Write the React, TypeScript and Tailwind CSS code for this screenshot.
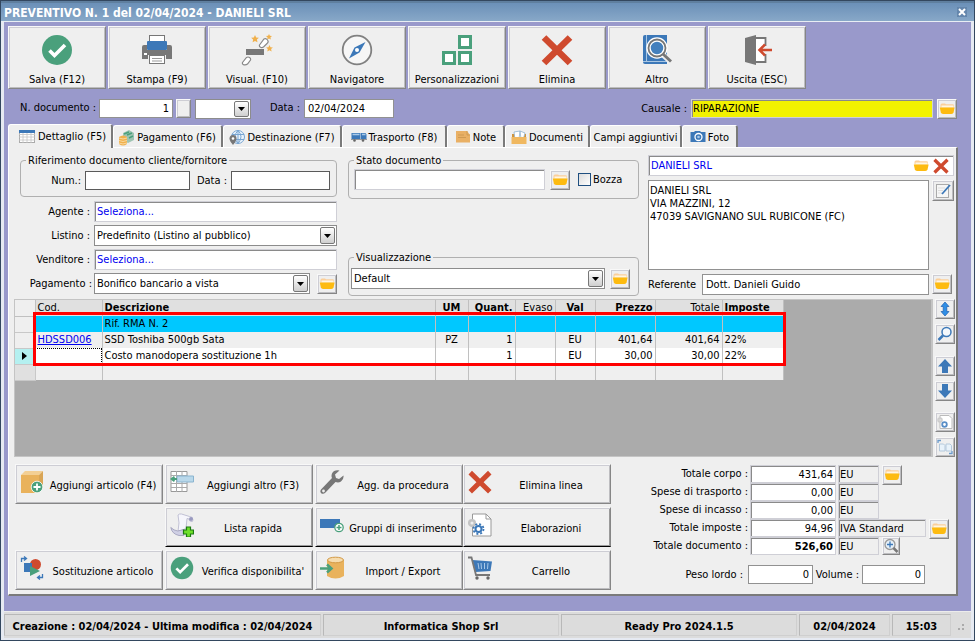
import React from "react";

const raised =
  "bg-[#efefef] border border-t-[#f8f8f8] border-l-[#f8f8f8] border-r-[#868686] border-b-[#868686] shadow-[inset_1px_1px_0_#cdcdd4,inset_-1px_-1px_0_#bdbdc0]";
const raisedDark =
  "bg-[#efefef] border border-t-[#f8f8f8] border-l-[#f8f8f8] border-r-[#868686] border-b-black shadow-[inset_1px_1px_0_#cdcdd4,inset_-1px_-1px_0_#9a9a9a]";
const sunkenEdge = "border border-[#cfcfd6] shadow-[inset_1px_1px_0_#8a8a8a]";
const sunken = "bg-white px-[2px] outline-none min-w-0 " + sunkenEdge;
const flat = "bg-white border border-[#919191] px-[3px] outline-none min-w-0";
const groupBox = "min-w-0 rounded-[4px] border border-[#b0b0b0]";

function Check() {
  return (
    <svg viewBox="0 0 32 32" className="size-full">
      <circle cx="16" cy="16" r="15" fill="#4aa07c" />
      <path d="M8.5 16.5l5 5L24 11" fill="none" stroke="#fff" strokeWidth="3.6" />
    </svg>
  );
}

function RedCross() {
  return (
    <svg viewBox="0 0 32 32" className="size-full">
      <path d="M3 3.500L29 29M29 3.500L3 29" stroke="#cf4a2e" strokeWidth="6.600" />
    </svg>
  );
}

function Printer() {
  return (
    <svg viewBox="0 0 32 32" className="size-full">
      <rect x="8.500" y="1.500" width="15" height="8" fill="#fff" stroke="#777" />
      <path d="M1 13q0-2 2-2h3v5h20v-5h3q2 0 2 2v12h-6v-4H7v4H1z" fill="#777" />
      <rect x="6" y="7" width="20" height="9" rx="1" fill="#3c78b8" />
      <rect x="8.500" y="21.500" width="15" height="8" fill="#fff" stroke="#777" />
      <path d="M11 24.500h10M11 27h10" stroke="#999" />
      <rect x="3" y="19" width="3" height="2" fill="#fff" />
    </svg>
  );
}

function Wand() {
  return (
    <svg viewBox="0 0 32 32" className="size-full">
      <path d="M14 1l1.200 2.400 2.700.3-2 1.900.6 2.700-2.500-1.400-2.400 1.400.5-2.700-2-1.900 2.700-.3zM28 0l.9 1.800 2.100.2-1.600 1.400.5 2-1.900-1-1.900 1 .5-2L25 2l2.100-.2zM28.500 11l1 2.200 2.400.3-1.800 1.600.5 2.400-2.100-1.200-2.200 1.200.5-2.400-1.700-1.600 2.300-.3z" fill="#f0b04c" />
      <rect x="5" y="15" width="18" height="6" fill="#777" />
      <path d="M18.500 11l4.500-6q2-1 3.500 1t-.5 3.500L22.500 13q-1.500 1-3 .3t-1-2.300zM1.500 28.500l4-5q1.500-1 3 0t1 2.500L6.500 30q-1.500 1.200-3.500.8t-1.500-2.300z" fill="#fff" stroke="#888" strokeWidth="1.200" />
    </svg>
  );
}

function Compass() {
  return (
    <svg viewBox="0 0 32 32" className="size-full">
      <circle cx="16" cy="16" r="14.300" fill="#f6f6f6" stroke="#808080" strokeWidth="1.800" />
      <path d="M24.500 8L18.500 18.500 8 24.500 13.500 13.500z" fill="#3c78b8" />
      <circle cx="16" cy="16" r="2" fill="#fff" />
    </svg>
  );
}

function Blocks() {
  return (
    <svg viewBox="0 0 32 32" className="size-full" fill="#fff" stroke="#4aa07c" strokeWidth="3">
      <rect x="18.500" y="2.500" width="11" height="11" />
      <rect x="2.500" y="18.500" width="11" height="11" />
      <rect x="18.500" y="18.500" width="11" height="11" />
    </svg>
  );
}

function BookSearch() {
  return (
    <svg viewBox="0 0 32 32" className="size-full">
      <path d="M2 3q0-2 2-2h22v29H4q-2 0-2-2z" fill="#3c78b8" />
      <path d="M5.500 1v26M2 27.500h24" stroke="#a9c6e2" />
      <path d="M21 20l9 8" stroke="#efefef" strokeWidth="5.500" />
      <circle cx="16" cy="14" r="8.500" fill="#4480bd" stroke="#fff" strokeWidth="4.500" />
      <circle cx="16" cy="14" r="8.500" fill="none" stroke="#777" strokeWidth="1.800" />
      <path d="M22 20l8 7.500" stroke="#777" strokeWidth="3" />
    </svg>
  );
}

function Door() {
  return (
    <svg viewBox="0 0 32 32" className="size-full">
      <path d="M13 4h11.500v24H13" fill="#fff" stroke="#777" strokeWidth="1.800" />
      <path d="M4 4l11-3v30L4 28z" fill="#777" />
      <path d="M31 16H20" stroke="#efefef" strokeWidth="8" />
      <path d="M31 16H19M24 10.500L18.500 16l5.500 5.500" fill="none" stroke="#cf4a2e" strokeWidth="2.600" />
    </svg>
  );
}

function Folder() {
  return (
    <svg viewBox="0 0 16 16" className="size-4 shrink-0">
      <path d="M1.500 4q0-1.500 1.500-1.500h3l1 .8h6.500q1.500 0 1.500 1.200v2h-13.500z" fill="#fbcf9a" />
      <path d="M2.500 4.500h12v2h-12z" fill="#fff6e2" />
      <path d="M.8 6.500h14.800l-1 4.700q-.4 1.800-2.200 1.800H4q-1.800 0-2.200-1.800z" fill="#fdbb10" />
    </svg>
  );
}

function FolderButton({ label }: { label: string }) {
  return (
    <button aria-label={label} className={"flex h-[20px] w-[20px] shrink-0 items-center justify-center " + raised}>
      <Folder />
    </button>
  );
}

function Drop({ id, label, value, className }: { id: string; label?: string; value: string; className: string }) {
  return (
    <div className={"relative " + className}>
      <select id={id} aria-label={label} className="size-full appearance-none border border-[#8c8c8c] bg-white px-[2px] outline-none">
        <option>{value}</option>
      </select>
      <span className="pointer-events-none absolute inset-y-[2px] right-[2px] flex w-[15px] items-center justify-center rounded-[2px] border border-[#777] bg-linear-to-b from-white to-[#cfcfcf]">
        <svg viewBox="0 0 7 4" className="h-[4px] w-[7px]">
          <path d="M0 0h7L3.500 4z" />
        </svg>
      </span>
    </div>
  );
}

const tools = [
  { label: "Salva (F12)", icon: <Check /> },
  { label: "Stampa (F9)", icon: <Printer /> },
  { label: "Visual. (F10)", icon: <Wand /> },
  { label: "Navigatore", icon: <Compass /> },
  { label: "Personalizzazioni", icon: <Blocks /> },
  { label: "Elimina", icon: <RedCross /> },
  { label: "Altro", icon: <BookSearch /> },
  { label: "Uscita (ESC)", icon: <Door /> },
];

const tabIcons = {
  table: (
    <svg viewBox="0 0 16 16" className="size-4">
      <rect x=".5" y="1.500" width="15" height="12" fill="#fff" stroke="#aaa" />
      <path d="M0 5.500h16M0 8h16M0 11h16M4 4v10M8 4v10M12 4v10" stroke="#c4c4c4" strokeWidth=".8" />
      <rect y="1" width="16" height="3" fill="#3c78b8" />
    </svg>
  ),
  money: (
    <svg viewBox="0 0 16 16" className="size-4">
      <path d="M4 3l6-3 5 3v7l-6 3-5-3z" fill="#9fc4b2" />
      <path d="M5 4l5-2M8 5l5-2M10 8l4-2" stroke="#4aa07c" strokeWidth="1.500" />
      <path d="M0 7q4-3 8 0v7q-4 3-8 0z" fill="#f0b04c" />
      <path d="M0 8q4 2 8 0M0 10.500q4 2 8 0M0 13q4 2 8 0" fill="none" stroke="#fbe2b4" strokeWidth=".8" />
    </svg>
  ),
  globe: (
    <svg viewBox="0 0 16 16" className="size-4">
      <circle cx="9" cy="7" r="6.500" fill="#eaf3fb" stroke="#78a5d2" />
      <path d="M9 .5v13M3 4.500h12M3 9.500h12M9 .5q-6 6 0 13M9 .5q6 6 0 13" fill="none" stroke="#78a5d2" />
      <path d="M4 5q3.500 0 3.500 3.500Q7.500 11 4 15 .5 11 .5 8.500.5 5 4 5z" fill="#777" />
      <circle cx="4" cy="8.500" r="1.300" fill="#fff" />
    </svg>
  ),
  truck: (
    <svg viewBox="0 0 16 16" className="size-4">
      <path d="M.5 3h9v6h-9zM10 3h4.500l1 1.500V9H10z" fill="#3c78b8" />
      <path d="M1.500 4.500h7M11 4.500h3.500" stroke="#a9c9e8" strokeWidth="1.500" />
      <path d="M0 9h16v1H0z" fill="#9a9a9a" />
      <circle cx="3.500" cy="10.500" r="1.300" fill="#666" />
      <circle cx="12" cy="10.500" r="1.300" fill="#666" />
    </svg>
  ),
  note: (
    <svg viewBox="0 0 16 16" className="size-4">
      <path d="M1 1h11l3 4v7.500H1z" fill="#e9b065" />
      <path d="M12 1v4h3M3 5h6M3 7.500h8" fill="none" stroke="#cf9a52" />
    </svg>
  ),
  docs: (
    <svg viewBox="0 0 16 16" className="size-4">
      <path d="M1 4h14v9H1z" fill="#cf943d" />
      <path d="M3 2l6-1 1 8-6 1zM9 1l5 2-2 7-4-1z" fill="#fff" stroke="#8fb2cf" strokeWidth=".8" />
      <path d="M.5 7h15v7H.5z" fill="#f0b860" />
    </svg>
  ),
  camera: (
    <svg viewBox="0 0 16 16" className="size-4">
      <path d="M.5 2H4l1-1h5l1 1h4.500v10H.5z" fill="#3c78b8" />
      <circle cx="8.500" cy="7" r="3.500" fill="#3c78b8" stroke="#fff" strokeWidth="1.300" />
      <circle cx="8.500" cy="7" r="1.300" fill="#a9c9e8" />
    </svg>
  ),
};

const tabs = [
  { label: "Pagamento (F6)", icon: tabIcons.money, w: "w-[110px]" },
  { label: "Destinazione (F7)", icon: tabIcons.globe, w: "w-[119px]" },
  { label: "Trasporto (F8)", icon: tabIcons.truck, w: "w-[105px]" },
  { label: "Note", icon: tabIcons.note, w: "w-[58px]" },
  { label: "Documenti", icon: tabIcons.docs, w: "w-[85px]" },
  { label: "Campi aggiuntivi", icon: null, w: "w-[92px]" },
  { label: "Foto", icon: tabIcons.camera, w: "w-[56px]" },
];

const sideIcons = [
  [
    {
      label: "Altezza righe",
      icon: (
        <svg viewBox="0 0 16 16" className="size-4">
          <path d="M8 1l4 4.500H9.800v5H12L8 15l-4-4.500h2.200v-5H4z" fill="#2f8ee6" stroke="#1f5fae" strokeWidth=".7" />
        </svg>
      ),
    },
    {
      label: "Cerca",
      icon: (
        <svg viewBox="0 0 16 16" className="size-4">
          <circle cx="9.500" cy="6" r="4.500" fill="#f4f8fc" stroke="#3c78b8" strokeWidth="1.500" />
          <path d="M6 9.500L1.500 14" stroke="#3c78b8" strokeWidth="2.500" />
        </svg>
      ),
    },
  ],
  [
    {
      label: "Sposta su",
      icon: (
        <svg viewBox="0 0 16 16" className="size-4">
          <path d="M8 1l7 7.500h-4V15H5V8.500H1z" fill="#3c78b8" />
        </svg>
      ),
    },
    {
      label: "Sposta giù",
      icon: (
        <svg viewBox="0 0 16 16" className="size-4">
          <path d="M8 15l7-7.500h-4V1H5v6.500H1z" fill="#3c78b8" />
        </svg>
      ),
    },
  ],
  [
    {
      label: "Elabora",
      icon: (
        <svg viewBox="0 0 16 16" className="size-4">
          <path d="M3 1.500h9l3 3v10H3z" fill="#fff" stroke="#bbb" />
          <circle cx="3" cy="6" r="2" fill="none" stroke="#ccc" strokeWidth="1.500" />
          <circle cx="7.500" cy="10.500" r="2.300" fill="#fff" stroke="#5a8ec6" strokeWidth="1.800" />
        </svg>
      ),
    },
    {
      label: "Sostituisci",
      icon: (
        <svg viewBox="0 0 16 16" className="size-4">
          <path d="M2.500 5h4l1.500 1.500V12H2.500zM9 5h4l1.500 1.500V12H9z" fill="#e8f2fa" stroke="#b4c9dc" />
          <path d="M1 4V1.500h3M15 12v2.500h-3" fill="none" stroke="#6a9acb" strokeWidth="1.300" />
        </svg>
      ),
    },
  ],
];

const actions = [
  {
    label: "Aggiungi articolo (F4)",
    icon: (
      <svg viewBox="0 0 24 24" className="size-6">
        <path d="M1 5l4-4h18l-4 4z" fill="#f3cf94" />
        <path d="M19 5l4-4v17l-4 4z" fill="#d9a555" />
        <path d="M1 5h18v18H1z" fill="#e9b25c" />
        <circle cx="17" cy="17" r="5.800" fill="#4aa07c" stroke="#fff" strokeWidth=".8" />
        <path d="M17 13.500v7M13.500 17h7" stroke="#fff" strokeWidth="1.800" />
      </svg>
    ),
  },
  {
    label: "Aggiungi altro (F3)",
    icon: (
      <svg viewBox="0 0 24 24" className="size-6">
        <path d="M1 1.500h16v20H1z" fill="#fff" stroke="#999" />
        <path d="M1 5.500h16M1 13.500h16M1 17.500h16M6.500 1v21M12 1v21" stroke="#aaa" />
        <path d="M7 6h16.500v6H7z" fill="#b9d8ea" stroke="#8ab4cf" />
        <path d="M7 9H2M4.500 6.800L1.500 9l3 2.200" fill="none" stroke="#4aa07c" strokeWidth="1.800" />
      </svg>
    ),
  },
  {
    label: "Agg. da procedura",
    icon: (
      <svg viewBox="0 0 24 24" className="size-6">
        <path d="M23.500 5.500L19 9l-3-1-1-3.500L19.500.5Q14-.5 12 3.500q-1 2.500 0 4.500L1 19.500q-1.500 2.500.5 4 2 1 4-1L15.500 12q3 1 5.500-.500 3-2 2.500-6z" fill="#777" />
        <circle cx="3.500" cy="21" r="1.400" fill="#efefef" />
      </svg>
    ),
  },
  {
    label: "Elimina linea",
    icon: <RedCross />,
  },
  null,
  {
    label: "Lista rapida",
    icon: (
      <svg viewBox="0 0 24 24" className="size-6">
        <path d="M8 2q1.500-1.500 3.500-1l8 2.500q3.500 0 3.500 3.500 0 2-2 1.500T19 6l-2-.5-1 10-8 3q2-9 0-16.500z" fill="#f6f6fc" stroke="#b4b4cc" strokeWidth=".8" />
        <circle cx="21" cy="6" r="2" fill="#9a9ac0" />
        <path d="M.8 14.500q3 3 7 3.500l6-1.500v6H9Q2 21 .8 14.500z" fill="#cfcfe4" stroke="#9a9ab8" strokeWidth=".8" />
        <path d="M16.500 14h4v3h3v4h-3v3h-4v-3h-3v-4h3z" fill="#6fe02a" stroke="#1c7a12" strokeWidth="1.200" />
      </svg>
    ),
  },
  {
    label: "Gruppi di inserimento",
    icon: (
      <svg viewBox="0 0 24 24" className="size-6">
        <path d="M0 6h20v9H0z" fill="#3c78b8" />
        <circle cx="19" cy="14.500" r="4.200" fill="#fff" stroke="#4aa07c" strokeWidth="1.300" />
        <path d="M19 12v5M16.500 14.500h5" stroke="#4aa07c" strokeWidth="1.500" />
      </svg>
    ),
  },
  {
    label: "Elaborazioni",
    icon: (
      <svg viewBox="0 0 24 24" className="size-6">
        <path d="M4.500 1H18l5 5v17H4.500z" fill="#fff" stroke="#999" />
        <path d="M18 1v5h5" fill="none" stroke="#999" />
        <circle cx="4" cy="10" r="2.800" fill="#efefef" stroke="#c4c4c4" strokeWidth="2.500" />
        <circle cx="10.500" cy="16" r="5" fill="none" stroke="#3c78b8" strokeWidth="1.800" strokeDasharray="2 1.930" />
        <circle cx="10.500" cy="16" r="3" fill="#fff" stroke="#3c78b8" strokeWidth="2" />
      </svg>
    ),
  },
  {
    label: "Sostituzione articolo",
    icon: (
      <svg viewBox="0 0 24 24" className="size-6">
        <circle cx="15.500" cy="8.500" r="5.500" fill="#cf4a2e" />
        <path d="M4 7h8v9H4z" fill="#3c78b8" />
        <path d="M10 10l10 5-10 5z" fill="#4aa07c" />
        <path d="M1.500 6V2.500h4M4 .5l2.500 2L4 4.500M22.500 18v3.500h-4M20 19.500l-2.500 2 2.500 2" fill="none" stroke="#3c78b8" strokeWidth="1.300" />
      </svg>
    ),
  },
  { label: "Verifica disponibilita'", icon: <Check /> },
  {
    label: "Import / Export",
    icon: (
      <svg viewBox="0 0 24 24" className="size-6">
        <path d="M7 4v16q8.500 5 17 0V4z" fill="#e9b25c" />
        <ellipse cx="15.500" cy="4" rx="8" ry="2.800" fill="#f6dcae" stroke="#d39a45" />
        <path d="M0 12.500h10M7 8.500l4.500 4L7 16.500" fill="none" stroke="#4aa07c" strokeWidth="2.500" />
      </svg>
    ),
  },
  {
    label: "Carrello",
    icon: (
      <svg viewBox="0 0 24 24" className="size-6">
        <path d="M4.500 4L24 5.500 22.500 15 7.500 16z" fill="#3c78b8" />
        <path d="M10 7l1 6M13 7l.5 6M16.500 7v6M20 7l-.5 6" stroke="#a9c9e8" />
        <path d="M0 1.500h3.500L8 19h14" fill="none" stroke="#777" strokeWidth="1.800" />
        <circle cx="9" cy="22" r="1.700" fill="#666" />
        <circle cx="20" cy="22" r="1.700" fill="#666" />
      </svg>
    ),
  },
];

const columns = [
  { label: "Cod.", cls: "text-left font-normal" },
  { label: "Descrizione", cls: "text-left font-bold" },
  { label: "UM", cls: "text-center font-bold" },
  { label: "Quant.", cls: "text-right font-bold" },
  { label: "Evaso", cls: "text-right font-normal" },
  { label: "Val", cls: "text-center font-bold" },
  { label: "Prezzo", cls: "text-right font-bold" },
  { label: "Totale", cls: "text-right font-normal" },
  { label: "Imposte", cls: "text-left font-bold" },
];
const cellAlign = ["text-left", "text-left", "text-center", "text-right", "text-right", "text-center", "text-right", "text-right", "text-left"];
const rows = [
  { bg: "bg-[#00c8ff]", cells: ["", "Rif. RMA N. 2", "", "", "", "", "", "", ""] },
  { bg: "bg-[#efefef]", cells: ["HDSSD006", "SSD Toshiba 500gb Sata", "PZ", "1", "", "EU", "401,64", "401,64", "22%"] },
  { bg: "bg-white", cells: ["", "Costo manodopera sostituzione 1h", "", "1", "", "EU", "30,00", "30,00", "22%"] },
  { bg: "bg-[#efefef]", cells: ["", "", "", "", "", "", "", "", ""] },
];

function Grid() {
  return (
    <div className="relative min-h-[158px] flex-1 border border-r-2 border-[#c4c4c4] bg-[#ababab]">
      <table className="w-[768px] table-fixed border-collapse leading-[14px]">
        <colgroup>
          <col className="w-[20px]" />
          <col className="w-[67px]" />
          <col className="w-[333px]" />
          <col className="w-[33px]" />
          <col className="w-[47px]" />
          <col className="w-[40px]" />
          <col className="w-[40px]" />
          <col className="w-[60px]" />
          <col className="w-[67px]" />
          <col className="w-[61px]" />
        </colgroup>
        <thead>
          <tr className="h-4 bg-[#e0e0e0]">
            <th className="border border-t-0 border-l-0 border-[#c0c0c0] bg-[#efefef] p-0" />
            {columns.map((c) => (
              <th key={c.label} className={"border-r border-[#c0c0c0] px-[2px] py-0 " + c.cls}>
                {c.label}
              </th>
            ))}
          </tr>
        </thead>
        <tbody>
          {rows.map((r, i) => (
            <tr key={i} className={"h-4 " + r.bg}>
              <td className={"border border-l-0 border-[#c8c8c8] p-0 " + (i === 2 ? "bg-[#b4f0f0]" : i === 3 ? "bg-[#e0e0e0]" : "bg-[#efefef]")}>
                {i === 2 && (
                  <svg viewBox="0 0 5 8" className="mx-auto h-2 w-[5px]">
                    <path d="M0 0l5 4-5 4z" />
                  </svg>
                )}
              </td>
              {r.cells.map((c, j) => (
                <td
                  key={j}
                  className={
                    "border-r border-[#c0c0c0] px-[2px] py-0 whitespace-nowrap " +
                    (i === 2 && j === 0 ? "outline-1 -outline-offset-1 outline-black outline-dotted " : "") +
                    cellAlign[j]
                  }
                >
                  {j === 0 && c ? (
                    <a href="#" className="text-[#0000f0] underline">
                      {c}
                    </a>
                  ) : (
                    c
                  )}
                </td>
              ))}
            </tr>
          ))}
        </tbody>
      </table>
      <div className="pointer-events-none absolute top-[12px] left-[18px] h-[54px] w-[753px] border-3 border-[#ff0000]" />
    </div>
  );
}

const totals = [
  { id: "corpo", label: "Totale corpo :", value: "431,64", unit: "EU", bold: false },
  { id: "trasporto", label: "Spese di trasporto :", value: "0,00", unit: "EU", bold: false },
  { id: "incasso", label: "Spese di incasso :", value: "0,00", unit: "EU", bold: false },
  { id: "imposte", label: "Totale imposte :", value: "94,96", unit: "IVA Standard", bold: false },
  { id: "documento", label: "Totale documento :", value: "526,60", unit: "EU", bold: true },
];

function Totals() {
  return (
    <div className="mr-[4px] ml-auto flex w-[322px] flex-col pt-[1px]">
      {totals.map((t) => (
        <div key={t.id} className="flex h-[18px] gap-[2px]">
          <label htmlFor={t.id} className="w-[118px] shrink-0 text-right leading-[18px] whitespace-nowrap">
            {t.label}
          </label>
          <input id={t.id} defaultValue={t.value} className={"h-[18px] w-[86px] shrink-0 text-right " + sunken + (t.bold ? " font-bold" : "")} />
          <output className={"mr-[1px] h-[18px] shrink-0 pl-[1px] leading-[17px] " + sunkenEdge + (t.id === "imposte" ? " w-[88px]" : " w-[41px]")}>
            {t.unit}
          </output>
          {(t.id === "corpo" || t.id === "imposte") && <FolderButton label={"Apri " + t.label} />}
          {t.id === "documento" && (
            <button aria-label="Dettaglio totale" className={"flex h-[18px] w-[18px] items-center justify-center " + raised}>
              <svg viewBox="0 0 16 16" className="size-4 shrink-0">
                <circle cx="7" cy="6.500" r="5" fill="#e6f0f8" stroke="#999" strokeWidth="1.300" />
                <path d="M7 3.500v6M4 6.500h6" stroke="#3c78b8" strokeWidth="1.300" />
                <path d="M10.500 10l4 4" stroke="#777" strokeWidth="2.500" />
              </svg>
            </button>
          )}
        </div>
      ))}
      <div className="mt-[10px] flex h-[19px] items-center">
        <label htmlFor="peso" className="mr-[5px] w-[113px] text-right">
          Peso lordo :
        </label>
        <input id="peso" defaultValue="0" className={"h-[19px] w-[65px] text-right " + flat} />
        <label htmlFor="volume" className="w-[49px] pr-[3px] text-right whitespace-nowrap">
          Volume :
        </label>
        <input id="volume" defaultValue="0" className={"h-[19px] w-[63px] text-right " + flat} />
      </div>
    </div>
  );
}

function Header() {
  return (
    <>
      <div className="flex gap-[2px] px-[4px] pt-[4px]">
        {tools.map((t) => (
          <button key={t.label} className={"flex h-[63px] w-[98px] flex-col items-center justify-between pt-[7px] pb-[1px] " + raised}>
            <span className="size-[32px]">{t.icon}</span>
            <span className="whitespace-nowrap">{t.label}</span>
          </button>
        ))}
      </div>
      <div className="mt-[10px] flex h-5 pr-[14px] pl-4">
        <label htmlFor="ndoc" className="w-[79px] leading-[18px] whitespace-nowrap">
          N. documento :
        </label>
        <input id="ndoc" defaultValue="1" className={"h-[19px] w-[74px] text-right " + flat} />
        <button aria-label="Numerazione" className={"mx-[3px] h-[19px] w-[15px] " + raised} />
        <Drop id="serie" label="Serie" value="" className="ml-[1px] h-5 w-[56px]" />
        <label htmlFor="data" className="w-[53px] pr-[4px] text-right leading-[18px]">
          Data :
        </label>
        <input id="data" defaultValue="02/04/2024" className={"h-[19px] w-[90px] " + flat} />
        <label htmlFor="causale" className="ml-auto pr-[4px] leading-[20px]">
          Causale :
        </label>
        <input
          id="causale"
          defaultValue="RIPARAZIONE"
          className={"mr-[4px] h-[19px] w-[242px] bg-[#f2f200] px-[1px] outline-none " + sunkenEdge}
        />
        <FolderButton label="Apri causale" />
      </div>
    </>
  );
}

function Customer() {
  return (
    <div className="flex flex-1 flex-col gap-[4px] pt-[1px]">
      <div className={"flex h-[21px] items-center bg-white " + sunkenEdge}>
        <input aria-label="Cliente" defaultValue="DANIELI SRL" className="min-w-0 flex-1 px-[2px] text-[#0000f0] outline-none" />
        <button aria-label="Apri cliente" className="mr-[4px]">
          <Folder />
        </button>
        <button aria-label="Rimuovi cliente" className="mr-[4px] size-4">
          <RedCross />
        </button>
      </div>
      <div className="flex gap-[3px]">
        <textarea
          aria-label="Indirizzo"
          defaultValue={"DANIELI SRL\nVIA MAZZINI, 12\n47039 SAVIGNANO SUL RUBICONE (FC)"}
          className="h-[90px] min-w-0 flex-1 resize-none border border-[#919191] bg-white px-[1px] py-[3px] leading-[13px] outline-none"
        />
        <button aria-label="Modifica indirizzo" className={"flex h-[21px] w-[22px] items-center justify-center " + raised}>
          <svg viewBox="0 0 16 16" className="size-4">
            <rect x="1.500" y="1.500" width="12" height="13" fill="#f6f6f6" stroke="#aaa" />
            <path d="M3 5h7M3 7.500h5M3 10h4" stroke="#ddd" />
            <path d="M15 2L7 11" stroke="#3c78b8" strokeWidth="1.800" />
          </svg>
        </button>
      </div>
      <div className="flex items-start gap-[3px]">
        <label htmlFor="referente" className="w-[51px] leading-[22px]">
          Referente
        </label>
        <input id="referente" defaultValue="Dott. Danieli Guido" className={"h-[21px] flex-1 " + flat} />
        <div className="w-[22px]">
          <FolderButton label="Apri referente" />
        </div>
      </div>
    </div>
  );
}

function TopForm() {
  return (
    <div className="flex pt-[6px] pr-[2px] pl-[11px]">
      <div className="flex w-[317px] flex-col gap-[3px]">
        <fieldset className={"mb-[1px] " + groupBox}>
          <legend className="ml-[5px] h-[13px] px-[2px] leading-[13px]">Riferimento documento cliente/fornitore</legend>
          <div className="flex items-center pt-[4px] pr-[6px] pb-[6px]">
            <label htmlFor="rifnum" className="w-[64px] pr-[4px] text-right">
              Num.:
            </label>
            <input id="rifnum" className="h-[19px] w-[105px] border border-[#5a5a5a] bg-white" />
            <label htmlFor="rifdata" className="w-[41px] pr-[4px] text-right whitespace-nowrap">
              Data :
            </label>
            <input id="rifdata" className="h-[19px] min-w-0 flex-1 border border-[#5a5a5a] bg-white" />
          </div>
        </fieldset>
        <div className="flex items-center">
          <label htmlFor="agente" className="w-[74px] pr-[4px] text-right">Agente :</label>
          <input id="agente" defaultValue="Seleziona..." className={"h-[21px] flex-1 text-[#0000f0] " + sunken} />
        </div>
        <div className="flex items-center">
          <label htmlFor="listino" className="w-[74px] pr-[4px] text-right">Listino :</label>
          <Drop id="listino" value="Predefinito (Listino al pubblico)" className="h-[21px] flex-1" />
        </div>
        <div className="flex items-center">
          <label htmlFor="venditore" className="w-[74px] pr-[4px] text-right">Venditore :</label>
          <input id="venditore" defaultValue="Seleziona..." className={"h-[21px] flex-1 text-[#0000f0] " + sunken} />
        </div>
        <div className="flex items-center">
          <label htmlFor="pagamento" className="w-[74px] pr-[2px] text-right whitespace-nowrap">Pagamento :</label>
          <Drop id="pagamento" value="Bonifico bancario a vista" className="mr-[7px] h-[21px] flex-1" />
          <FolderButton label="Apri pagamento" />
        </div>
      </div>
      <div className="mr-[9px] ml-[11px] flex w-[291px] flex-col justify-between">
        <fieldset className={groupBox}>
          <legend className="ml-[5px] h-[13px] px-[2px] leading-[13px]">Stato documento</legend>
          <div className="flex items-center pt-[2px] pb-[8px] pl-[5px]">
            <input aria-label="Stato documento" className={"mr-[5px] h-[21px] w-[191px] " + sunken} />
            <FolderButton label="Apri stato documento" />
            <input id="bozza" type="checkbox" className="mr-[2px] ml-[8px] size-[13px] appearance-none border border-[#1f4f80] bg-linear-to-br from-[#dcdcdc] to-white" />
            <label htmlFor="bozza">Bozza</label>
          </div>
        </fieldset>
        <fieldset className={groupBox}>
          <legend className="ml-[5px] h-[13px] px-[2px] leading-[13px]">
            <label htmlFor="vista">Visualizzazione</label>
          </legend>
          <div className="flex items-center gap-[5px] pt-[4px] pb-[6px] pl-[2px]">
            <Drop id="vista" value="Default" className="h-[21px] w-[254px]" />
            <FolderButton label="Apri visualizzazione" />
          </div>
        </fieldset>
      </div>
      <Customer />
    </div>
  );
}

const statusCell =
  "flex items-center justify-center overflow-hidden border border-t-[#b8b8b8] border-l-[#b8b8b8] border-r-[#cfcfcf] border-b-[#cfcfcf] pt-[3px] whitespace-nowrap";

export default function App() {
  return (
    <div className="flex min-h-screen flex-col border border-[#33475f] bg-[#e6eaf2] px-[3px] pb-[2px] text-[11px] leading-[14px] text-black [font-family:'DejaVu_Sans_Condensed','DejaVu_Sans',sans-serif] [font-stretch:condensed]">
      <header className="-mx-[3px] flex h-[21px] items-center border-t-2 border-b border-t-[#5f7f9f] border-b-[#e8eef4] bg-linear-to-b from-[#6b90b8] to-[#88a8c8] pt-[2px] pr-[7px] pl-[3px]">
        <h1 className="text-[12px] font-bold text-white">PREVENTIVO N. 1 del 02/04/2024 - DANIELI SRL</h1>
        <button aria-label="Chiudi" className="mb-[2px] ml-auto flex size-[10px] items-center justify-center bg-[#6486ac]">
          <svg viewBox="0 0 8 8" className="size-2">
            <path d="M1 1l6 6M7 1L1 7" stroke="#fff" strokeWidth="2" />
          </svg>
        </button>
      </header>
      <main className="flex flex-1 flex-col bg-[#9999cb] pb-[15px]">
        <Header />
        <div role="tablist" className="mt-[5px] flex h-[23px] items-end pl-[4px]">
          <button role="tab" aria-selected="true" className="z-10 -mb-[1px] flex h-6 w-[105px] items-center gap-[3px] rounded-t-[3px] border-t border-r-2 border-l border-t-white border-r-[#7a7a7a] border-l-white bg-[#efefef] pl-[10px] whitespace-nowrap">
            {tabIcons.table}
            Dettaglio (F5)
          </button>
          {tabs.map((t) => (
            <button
              key={t.label}
              role="tab"
              aria-selected="false"
              className={"flex h-[22px] items-center justify-center gap-[2px] rounded-t-[3px] border-t border-r-2 border-l border-t-white border-r-[#7a7a7a] border-l-white bg-[#efefef] pt-[3px] whitespace-nowrap " + t.w}
            >
              {t.icon}
              {t.label}
            </button>
          ))}
        </div>
        <section className="mr-[13px] ml-[4px] flex flex-1 flex-col border-t border-r-2 border-b-2 border-l border-t-white border-r-[#7a7a7a] border-b-[#7a7a7a] border-l-white bg-[#efefef]">
          <TopForm />
          <div className="mt-[3px] flex flex-1 gap-[2px] pr-[1px] pl-[5px]">
            <Grid />
            <div className="flex flex-col justify-between">
              {sideIcons.map((g, i) => (
                <div key={i} className="flex flex-col gap-[5px]">
                  {g.map((b) => (
                    <button key={b.label} aria-label={b.label} className={"flex size-5 items-center justify-center " + raised}>
                      {b.icon}
                    </button>
                  ))}
                </div>
              ))}
            </div>
          </div>
          <div className="mt-[7px] flex pb-[4px] pl-[6px]">
            <div className="grid grid-cols-[150px_150px_148px_148px] gap-y-[3px]">
              {actions.map((a, i) =>
                a ? (
                  <button key={i} className={"flex h-10 w-[148px] items-center pl-[4px] " + (i > 4 && i < 8 ? raisedDark : raised)}>
                    <span className="mb-[4px] size-6 shrink-0">{a.icon}</span>
                    <span className="flex-1 pt-[3px] text-center whitespace-nowrap">{a.label}</span>
                  </button>
                ) : (
                  <span key={i} />
                ),
              )}
            </div>
            <Totals />
          </div>
        </section>
      </main>
      <footer className="flex h-[27px] gap-[2px] border-t border-[#ececec] bg-[#dcdcdc] py-[2px] font-bold">
        <div className={"w-[317px] " + statusCell}>Creazione : 02/04/2024 - Ultima modifica : 02/04/2024</div>
        <div className={"flex-1 " + statusCell}>Informatica Shop Srl</div>
        <div className={"flex-1 " + statusCell}>Ready Pro 2024.1.5</div>
        <div className={"w-[91px] " + statusCell}>02/04/2024</div>
        <div className={"w-[59px] " + statusCell}>15:03</div>
        <svg viewBox="0 0 18 22" className="w-[18px]">
          <path d="M9 10h2v2H9zM9 14h2v2H9zM5 14h2v2H5z" fill="#aaa" />
        </svg>
      </footer>
    </div>
  );
}
